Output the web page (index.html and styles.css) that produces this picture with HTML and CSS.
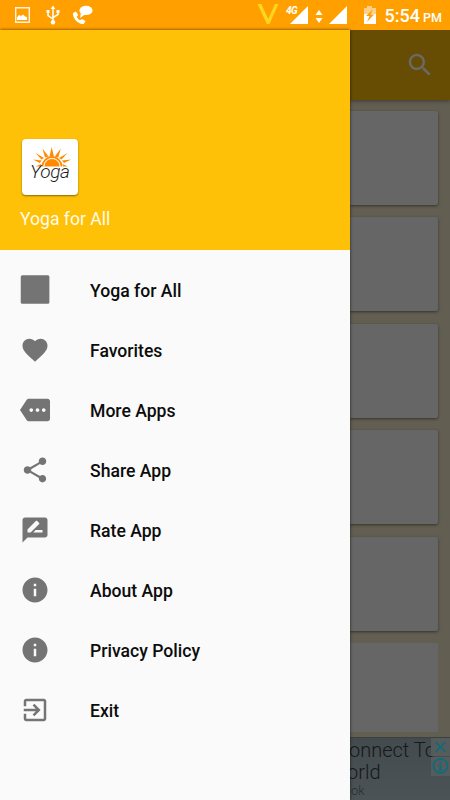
FILE: index.html
```html
<!DOCTYPE html>
<html lang="en">
<head>
<meta charset="utf-8">
<title>Yoga for All</title>
<link rel="stylesheet" href="styles.css">
</head>
<body>
<div class="screen">
  <header class="status">
    <svg class="status-icons" viewBox="0 0 450 30">
      <path fill="none" stroke="#fff3df" stroke-width="1.4" d="M15.7 7.7h13.6v14.6H15.7z"/>
      <path fill="#fff" d="M17 20v-2.500l2-2.500 2 1 2-1.500 2 2 2 .5V20z"/>
      <g fill="none" stroke="#fff" stroke-width="1.500"><path d="M53 8v13M48 12v3.500l5 3.500M58 12v2.500l-5 3"/></g>
      <path fill="#fff" d="M50.700 9L53 5.500 55.300 9zM46.500 10h3v3h-3zM56.500 10h3v3h-3z"/>
      <circle cx="53" cy="22.300" r="2.200" fill="#fff"/>
      <path fill="#fff" d="M73 13l3-1.500 2.200 3.600-1.500 1.700q1 2.300 3.300 3.400l2-1.200 3.500 2-1.500 2.700c-4 1.500-11.500-4-11-10.700z"/>
      <ellipse cx="86" cy="10.400" rx="6.600" ry="4.600" fill="#fff"/>
      <path fill="#fff" d="M81 12l-1 6 5-3.500z"/>
      <path fill="#ffd51e" d="M257.500 4h3.800l7 15L275 4h3.500l-9 20h-2.600z"/>
      <path fill="#fff" d="M308 6v18h-18zM347 6v18h-18zM315.500 15l3.500-5 3.500 5zM315.500 18h7l-3.500 5z"/>
      <path fill="#ffd08a" d="M367 6h5v2h4v7h-12V8h3z"/>
      <path fill="#fff" d="M364 14h12v10h-12z"/>
      <path fill="#ffa000" d="M373 9l-7 7h3.500L367 22l7-7.500h-3.500z"/>
    </svg>
    <span class="network">4G</span>
    <div class="clock"><span>5:54</span><span class="meridiem">PM</span></div>
  </header>
  <div class="body">
    <aside class="drawer">
      <div class="profile">
        <div class="logo">
          <svg viewBox="0 0 56 56">
            <path fill="#ff8a00" d="M22 27.500a8 8 0 0 1 16 0z"/>
            <path fill="none" stroke="#ff8a00" stroke-width="1.800" d="M20.500 27.500a9.500 9.500 0 0 1 19 0"/>
            <path fill="none" stroke="#fff" stroke-width=".8" d="M22 27.500a8 8 0 0 1 16 0"/>
            <path fill="#ff8a00" d="M27.500 17.500L29.700 8l2.200 9.500zM23 18.500L20.500 9.500l6 8zM32.800 17.500l6-8-2.500 9zM19.500 20.500L13.500 14l8.500 5zM37 19l8.500-5-6 6.500zM17.800 24L11 20.500l8.700 1zM40 21.500l9-1-7 3.500zM18.500 27.500h-5l5.500-2.500zM41 27.500h5L40.500 25z"/>
          </svg>
          <span class="logo-text">Yoga</span>
        </div>
        <div class="profile-name">Yoga for All</div>
      </div>
      <nav class="menu">
        <a class="item"><svg viewBox="0 0 24 24"><rect x=".6" y=".2" width="22.900" height="22.800" rx="1.200"/></svg>Yoga for All</a>
        <a class="item"><svg viewBox="0 0 24 24"><path d="M12 21.350l-1.450-1.320C5.400 15.360 2 12.280 2 8.500 2 5.420 4.420 3 7.500 3c1.740 0 3.410.81 4.500 2.090C13.090 3.810 14.760 3 16.500 3 19.580 3 22 5.420 22 8.500c0 3.780-3.400 6.860-8.550 11.540L12 21.350z"/></svg>Favorites</a>
        <a class="item"><svg viewBox="0 0 24 24"><path d="M22 3H7c-.69 0-1.230.35-1.590.88L0 12l5.410 8.110c.36.53.97.89 1.660.89H22c1.100 0 2-.9 2-2V5c0-1.100-.9-2-2-2zM9 13.500c-.83 0-1.500-.67-1.500-1.500s.67-1.500 1.500-1.500 1.500.67 1.500 1.500-.67 1.500-1.500 1.500zm5 0c-.83 0-1.500-.67-1.500-1.500s.67-1.500 1.500-1.500 1.500.67 1.500 1.500-.67 1.500-1.500 1.500zm5 0c-.83 0-1.500-.67-1.500-1.500s.67-1.500 1.500-1.500 1.500.67 1.500 1.500-.67 1.500-1.500 1.500z"/></svg>More Apps</a>
        <a class="item"><svg viewBox="0 0 24 24"><path d="M18 16.080c-.76 0-1.440.3-1.960.77L8.910 12.700c.05-.23.09-.46.09-.7s-.04-.47-.09-.7l7.050-4.110c.54.5 1.250.81 2.040.81 1.660 0 3-1.340 3-3s-1.340-3-3-3-3 1.340-3 3c0 .24.04.47.09.7L8.040 9.810C7.500 9.310 6.790 9 6 9c-1.660 0-3 1.340-3 3s1.340 3 3 3c.79 0 1.500-.31 2.040-.81l7.120 4.160c-.05.21-.08.43-.08.65 0 1.610 1.310 2.920 2.920 2.920s2.920-1.310 2.920-2.920-1.310-2.920-2.920-2.920z"/></svg>Share App</a>
        <a class="item"><svg viewBox="0 0 24 24"><path d="M20 2H4c-1.100 0-1.990.9-1.990 2L2 22l4-4h14c1.100 0 2-.9 2-2V4c0-1.100-.9-2-2-2zM6 14v-2.470l6.880-6.880c.2-.2.51-.2.71 0l1.770 1.770c.2.2.2.51 0 .71L8.470 14H6zm12 0h-7.500l2-2H18v2z"/></svg>Rate App</a>
        <a class="item"><svg viewBox="0 0 24 24"><path d="M12 2C6.480 2 2 6.480 2 12s4.480 10 10 10 10-4.480 10-10S17.520 2 12 2zm1 15h-2v-6h2v6zm0-8h-2V7h2v2z"/></svg>About App</a>
        <a class="item"><svg viewBox="0 0 24 24"><path d="M12 2C6.480 2 2 6.480 2 12s4.480 10 10 10 10-4.480 10-10S17.520 2 12 2zm1 15h-2v-6h2v6zm0-8h-2V7h2v2z"/></svg>Privacy Policy</a>
        <a class="item"><svg viewBox="0 0 24 24"><path d="M10.090 15.590L11.500 17l5-5-5-5-1.410 1.410L12.670 11H3v2h9.670l-2.580 2.590zM19 3H5c-1.110 0-2 .9-2 2v4h2V5h14v14H5v-4H3v4c0 1.100.89 2 2 2h14c1.100 0 2-.9 2-2V5c0-1.100-.9-2-2-2z"/></svg>Exit</a>
      </nav>
    </aside>
    <main class="content">
      <div class="toolbar">
        <svg viewBox="0 0 24 24"><path d="M15.500 14h-.79l-.28-.27C15.410 12.590 16 11.110 16 9.500 16 5.910 13.090 3 9.500 3S3 5.910 3 9.500 5.910 16 9.500 16c1.610 0 3.090-.59 4.230-1.570l.27.28v.79l5 4.990L20.490 19l-4.990-5zm-6 0C7.010 14 5 11.990 5 9.500S7.010 5 9.500 5 14 7.010 14 9.500 11.990 14 9.500 14z"/></svg>
      </div>
      <div class="cards">
        <div class="card"></div>
        <div class="card"></div>
        <div class="card"></div>
        <div class="card"></div>
        <div class="card"></div>
        <div class="card"></div>
      </div>
      <div class="ad">
        <div class="ad-title">onnect To</div>
        <div class="ad-title second">orld</div>
        <div class="ad-source">ok</div>
        <svg class="ad-controls" viewBox="0 0 19 39">
          <path fill="#565b5c" d="M0 1h19v18H0zM0 20h19v19H0z"/>
          <g fill="none" stroke="#086d80" stroke-width="1.600"><path d="M4.500 5l10 10M14.500 5l-10 10"/><circle cx="9.500" cy="29" r="7"/></g>
          <path fill="#086d80" d="M8.500 24.500h2v2h-2zM7.500 27.800h3v4.700h1.200V34H7.500v-1.500h1.200v-3.200H7.500z"/>
        </svg>
      </div>
    </main>
  </div>
</div>
</body>
</html>
```
FILE: styles.css
```css
* { box-sizing: border-box; }
body { margin: 0; font-family: Roboto, sans-serif; }
.screen { width: 450px; height: 800px; overflow: hidden; display: flex; flex-direction: column; }
.status { position: relative; flex: none; height: 30px; background: #ffa000; color: #fff; }
.status-icons { display: block; width: 450px; height: 30px; }
.network { position: absolute; left: 286px; top: 5px; font-size: 10px; line-height: 12px; font-weight: 700; font-style: italic; letter-spacing: -.5px; }
.clock { position: absolute; left: 384.500px; top: 5px; display: flex; align-items: baseline; gap: 3px; font-size: 18px; line-height: 22px; font-weight: 500; white-space: nowrap; }
.meridiem { font-size: 12.500px; line-height: 14px; }
.body { display: flex; flex: 1; min-height: 0; }
.drawer { width: 350px; flex: none; background: #fafafa; z-index: 1; box-shadow: 0 0 3px #000a; }
.profile { height: 220px; background: #ffc107; padding: 109px 20px 0; }
.logo { position: relative; width: 56px; height: 56px; margin-left: 2px; background: #fff; border-radius: 4px; box-shadow: 0 1px 2px #0007; }
.logo svg { display: block; width: 56px; height: 56px; }
.logo-text { position: absolute; left: 8px; top: 21px; font: italic 300 19px/24px Roboto, sans-serif; color: #1c1c1c; letter-spacing: -.3px; }
.profile-name { margin-top: 14px; font-size: 17.600px; line-height: 21px; color: #fffbea; }
.menu { padding-top: 10px; }
.item { display: flex; align-items: center; gap: 40px; height: 60px; padding: 2px 20px 0; font-size: 17.600px; font-weight: 500; color: #0c0c0c; }
.item svg { width: 30px; height: 30px; fill: #747474; margin-top: -2px; }
.content { flex: 1; min-width: 0; background: #635e52; display: flex; flex-direction: column; overflow: hidden; }
.toolbar { flex: none; height: 70px; background: #664d03; display: flex; align-items: center; justify-content: flex-end; padding-right: 15px; box-shadow: 0 1px 4px #0006; }
.toolbar svg { width: 30px; height: 30px; fill: #6b6866; }
.cards { height: 637px; flex: none; display: flex; flex-direction: column; gap: 12.400px; padding: 11px 12.500px 0 0; overflow: hidden; }
.card { flex: none; height: 94px; background: #666; border-radius: 0 2px 2px 0; box-shadow: 0 1px 3px #0007; }
.card:last-child { height: 89px; border-radius: 0 2px 0 0; box-shadow: none; }
.ad { position: relative; flex: 1; background: linear-gradient(#444b4e, #4b5356); border-top: 1px solid #3b4143; color: #161819; overflow: hidden; }
.ad-title { font-size: 20px; line-height: 22px; font-weight: 300; white-space: nowrap; margin-top: 1px; margin-left: -1px; }
.ad-title.second { margin-top: 0; margin-left: -3px; }
.ad-source { font-size: 13px; line-height: 15px; font-weight: 300; color: #292e30; margin-left: 1px; }
.ad-controls { position: absolute; right: 0; top: -1px; width: 19px; height: 39px; }
```
